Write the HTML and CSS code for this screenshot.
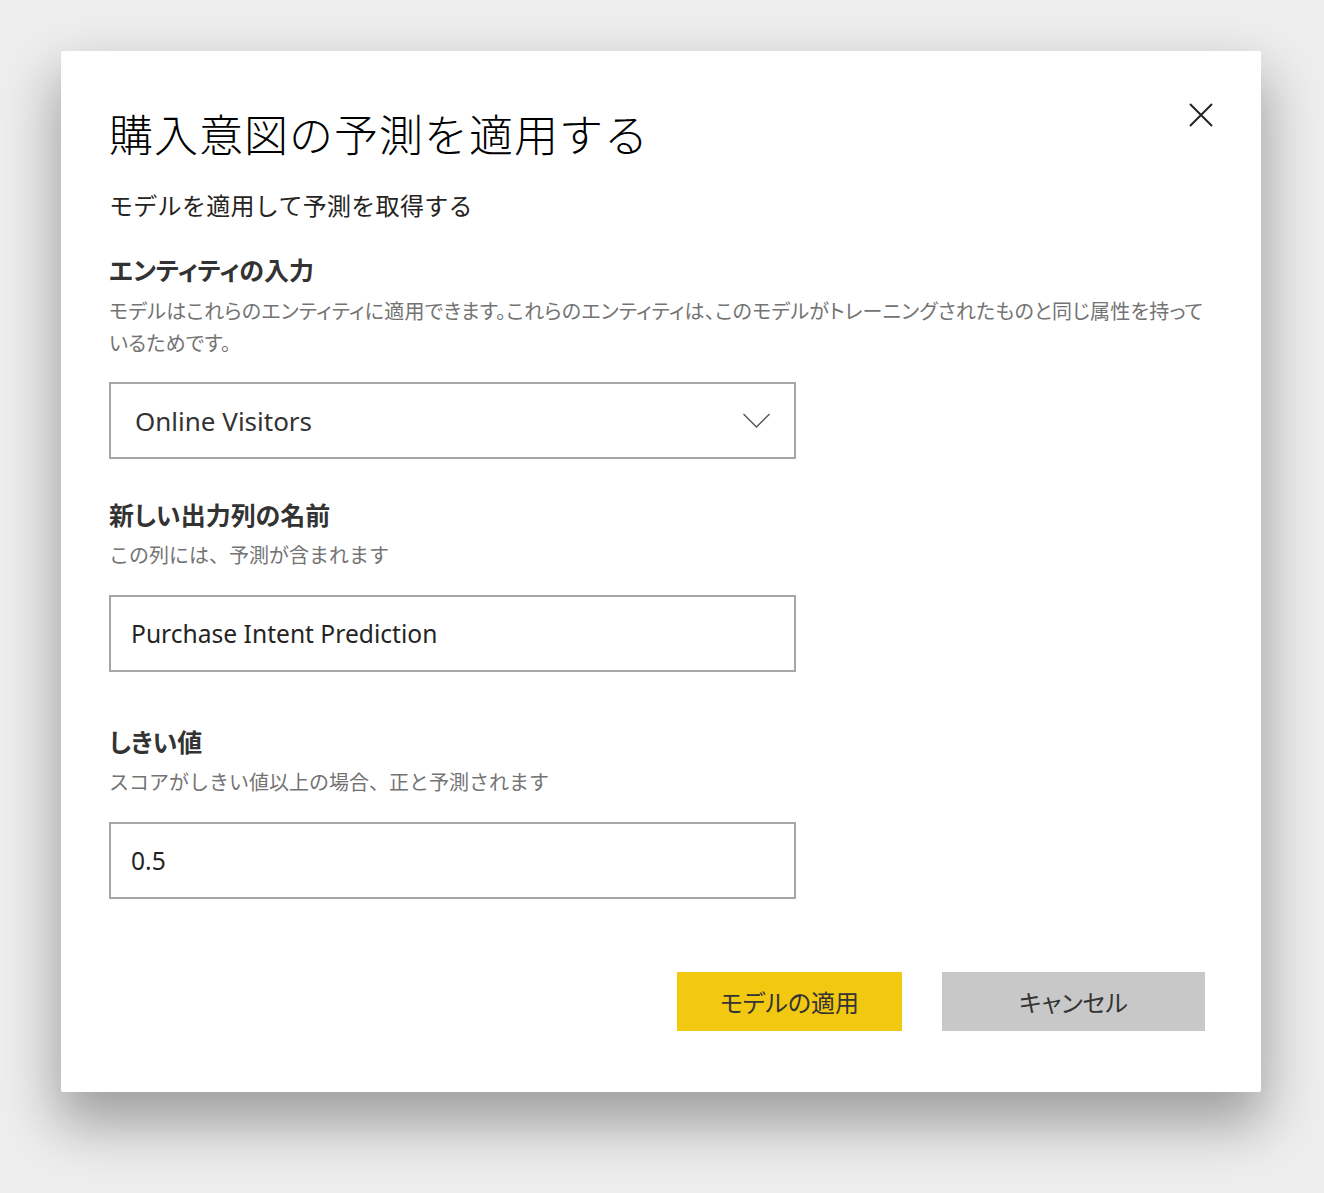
FILE: index.html
```html
<!DOCTYPE html>
<html lang="ja">
<head>
<meta charset="utf-8">
<title>購入意図の予測を適用する</title>
<link rel="stylesheet" href="styles.css">
</head>
<body>
<div class="dialog">
  <button class="close" aria-label="閉じる">
    <svg width="24" height="24" viewBox="0 0 24 24"><path d="M1 1 L23 23 M23 1 L1 23" stroke="#252423" stroke-width="2" fill="none"/></svg>
  </button>
  <h1 class="title">購入意図の予測を適用する</h1>
  <p class="subtitle">モデルを適用して予測を取得する</p>

  <h2 class="heading h-first">エンティティの入力</h2>
  <p class="desc desc-long">モデルはこれらのエンティティに適用できます。これらのエンティティは、このモデルがトレーニングされたものと同じ属性を持っているためです。</p>
  <div class="field select">
    <span class="select-text">Online Visitors</span>
    <svg class="chevron" width="27" height="15" viewBox="0 0 27 15"><path d="M0.5 1 L13.5 14 L26.5 1" stroke="#555" stroke-width="1.4" fill="none"/></svg>
  </div>

  <h2 class="heading h-second">新しい出力列の名前</h2>
  <p class="desc desc-short">この列には、予測が含まれます</p>
  <div class="field input">Purchase Intent Prediction</div>

  <h2 class="heading h-third">しきい値</h2>
  <p class="desc desc-short">スコアがしきい値以上の場合、正と予測されます</p>
  <div class="field input">0.5</div>

  <div class="actions">
    <button class="btn btn-primary">モデルの適用</button>
    <button class="btn btn-secondary">キャンセル</button>
  </div>
</div>
</body>
</html>
```

FILE: styles.css
```css
html, body {
  margin: 0;
  padding: 0;
}
body {
  background: #eeeeee;
  width: 1324px;
  height: 1193px;
  overflow: hidden;
  font-family: "Noto Sans CJK JP", "Noto Sans", sans-serif;
}
.dialog {
  position: relative;
  box-sizing: border-box;
  width: 1200px;
  height: 1041px;
  margin: 51px 0 0 61px;
  padding: 52px 55px 0 48px;
  background: #ffffff;
  border-radius: 2px;
  box-shadow: 0 28px 56px 4px rgba(0, 0, 0, 0.34);
}
.close {
  position: absolute;
  top: 52px;
  right: 48px;
  width: 24px;
  height: 24px;
  padding: 0;
  border: 0;
  background: none;
  display: flex;
}
.title {
  margin: 0;
  font-size: 44px;
  line-height: 60px;
  font-weight: 300;
  letter-spacing: 1px;
  color: #000000;
}
.subtitle {
  margin: 26px 0 0;
  font-size: 24px;
  line-height: 32px;
  font-weight: 400;
  letter-spacing: 0.3px;
  color: #252423;
}
.heading {
  margin: 0;
  font-size: 25px;
  line-height: 32px;
  font-weight: 700;
  color: #333333;
  font-feature-settings: "palt";
}
.h-first { margin-top: 32px; }
.h-second { margin-top: 39px; }
.h-third { margin-top: 53px; }
.desc {
  margin: 9px 0 0;
  font-size: 20px;
  line-height: 32px;
  color: #737373;
}
.desc-long {
  margin-top: 10px;
  font-feature-settings: "palt";
  letter-spacing: 0.25px;
}
.field {
  box-sizing: border-box;
  width: 687px;
  height: 77px;
  border: 2px solid #a6a6a6;
  display: flex;
  align-items: center;
  font-family: "Noto Sans", "Open Sans", sans-serif;
  color: #252423;
}
.select {
  margin-top: 23px;
  padding: 0 24px 0 24px;
  justify-content: space-between;
  font-size: 26px;
  color: #333333;
}
.input {
  margin-top: 24px;
  padding-left: 20px;
  font-size: 24.6px;
}
.chevron {
  display: block;
}
.actions {
  margin-top: 73px;
  margin-right: 1px;
  display: flex;
  justify-content: flex-end;
  gap: 40px;
}
.btn {
  height: 59px;
  border: 0;
  padding: 0;
  font-family: "Noto Sans CJK JP", sans-serif;
  font-size: 24px;
  color: #333333;
  font-feature-settings: "palt";
}
.btn-primary {
  width: 225px;
  background: #f2c811;
}
.btn-secondary {
  width: 263px;
  background: #c8c8c8;
}
```
